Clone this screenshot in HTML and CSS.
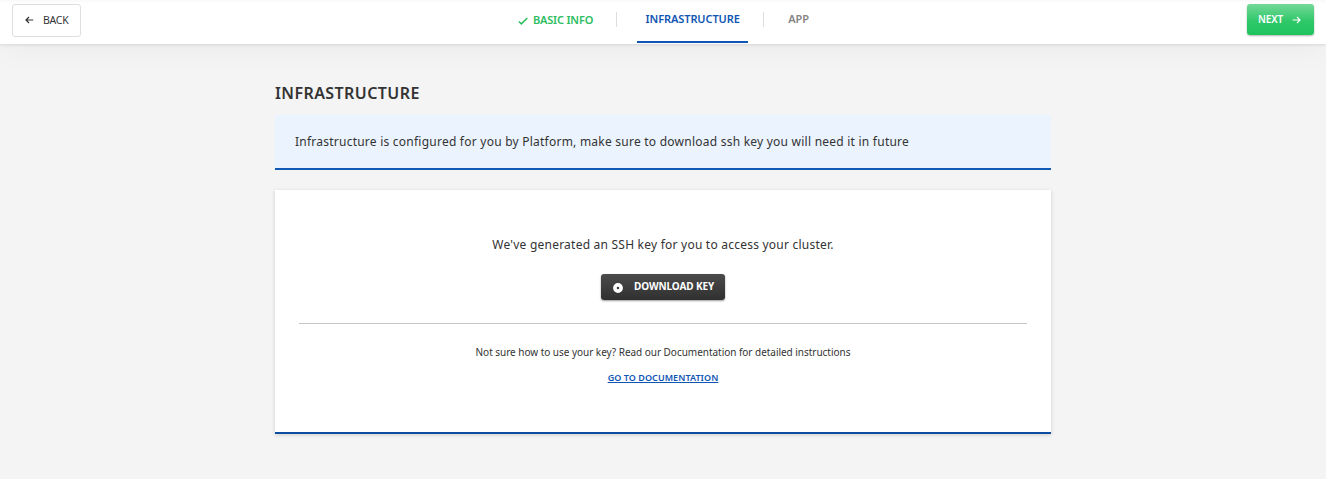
FILE: index.html
```html
<!DOCTYPE html>
<html lang="en">
<head>
<meta charset="utf-8">
<title>Infrastructure</title>
<link rel="stylesheet" href="styles.css">
</head>
<body>
<header class="topbar">
  <button class="btn btn-back">
    <svg class="icon-arrow" viewBox="0 0 9 8" width="9" height="8"><path d="M8.2 4H1M4 1L1 4l3 3"/></svg>
    <span class="t-back">BACK</span>
  </button>
  <nav class="steps">
    <a class="step step-done"><svg class="icon-check" viewBox="0 0 10 8" width="10" height="8"><path d="M.8 4.5l2.6 2.4L9.3 1"/></svg><span class="t-basic">BASIC INFO</span></a>
    <i class="divider"></i>
    <a class="step step-active"><span class="t-infra">INFRASTRUCTURE</span></a>
    <i class="divider"></i>
    <a class="step step-next"><span class="t-app">APP</span></a>
  </nav>
  <button class="btn btn-next">
    <span class="t-next">NEXT</span>
    <svg class="icon-arrow" viewBox="0 0 9 8" width="9" height="8"><path d="M.6 4H8M5 1l3 3-3 3"/></svg>
  </button>
</header>
<main class="content">
  <h1 class="title"><span>INFRASTRUCTURE</span></h1>
  <div class="notice"><span>Infrastructure is configured for you by Platform, make sure to download ssh key you will need it in future</span></div>
  <section class="card">
    <p class="lead"><span>We've generated an SSH key for you to access your cluster.</span></p>
    <button class="btn btn-download">
      <svg class="icon-disc" viewBox="0 0 10 10" width="10" height="10"><circle cx="5" cy="5" r="3.1"/></svg>
      <span class="t-download">DOWNLOAD KEY</span>
    </button>
    <hr class="rule">
    <p class="hint"><span>Not sure how to use your key? Read our Documentation for detailed instructions</span></p>
    <a class="doc-link">GO TO DOCUMENTATION</a>
  </section>
</main>
</body>
</html>
```
FILE: styles.css
```css
* { box-sizing: border-box; }
body {
  margin: 0;
  min-height: 479px;
  background: #f4f4f4;
  color: #333;
  font-family: "Noto Sans", sans-serif;
}
svg { display: block; fill: none; stroke: currentColor; flex: none; }
span { white-space: nowrap; }
.topbar {
  display: grid;
  grid-template-columns: 1fr auto 1fr;
  align-items: start;
  height: 44px;
  padding: 4px 12px 0;
  background: linear-gradient(#f8f8f8, #fff 3px);
  box-shadow: 0 1px 3px rgba(0,0,0,.1), 0 2px 32px rgba(0,0,0,.05);
}
.btn {
  display: flex;
  align-items: center;
  font: 500 10px/14px "Noto Sans", sans-serif;
  border: 0;
  border-radius: 3px;
}
.icon-arrow { stroke-width: 1.2; }
.btn-back {
  width: 69px;
  height: 33px;
  padding: 0 0 1px 12px;
  gap: 9px;
  border: 1px solid #dedede;
  background: #fff;
  color: #333;
  font-size: 10.5px;
  font-weight: 400;
  letter-spacing: -.25px;
}
.btn-next {
  justify-self: end;
  width: 67px;
  height: 31px;
  padding: 0 0 0 11px;
  gap: 9px;
  color: #fff;
  background: linear-gradient(#75d898, #2fc86a 55%, #1fc35e);
  box-shadow: 0 1px 2px rgba(0,0,0,.3);
  font-weight: 600;
  letter-spacing: -.1px;
}
.t-next { margin-top: -1px; }
.steps { display: flex; align-items: flex-start; padding-left: 1px; }
.step { display: flex; font-size: 11px; line-height: 15px; font-weight: 600; }
.step-done { color: #2cbd60; padding: 8px 23px 0 0; gap: 5px; letter-spacing: -.18px; }
.icon-check { stroke-width: 1.5; margin-top: 5px; }
.step-active {
  width: 111px;
  height: 39px;
  padding-top: 7px;
  justify-content: center;
  margin: 0 15px 0 20px;
  color: #0f55b3;
  letter-spacing: -.1px;
  border-bottom: 2px solid #0f55b3;
}
.step-next { color: #858585; padding: 7px 0 0 24px; }
.divider { width: 1px; height: 15px; margin-top: 8px; background: #ddd; }
.content { width: 776px; margin: 0 auto; padding-top: 37px; }
.title { margin: 0; font-size: 16px; line-height: 24px; font-weight: 600; letter-spacing: .42px; }
.notice {
  height: 55px;
  margin-top: 10px;
  padding: 18px 20px 0;
  background: #ebf3ff;
  border-bottom: 2px solid #0f5ab5;
  font-size: 12px;
  line-height: 18px;
  letter-spacing: .236px;
}
.card {
  display: flex;
  flex-direction: column;
  align-items: center;
  height: 244px;
  margin-top: 20px;
  padding: 46px 24px 0;
  background: #fff;
  border-bottom: 2px solid #0c4da2;
  box-shadow: 0 1px 4px rgba(0,0,0,.16);
}
.lead { margin: 0; font-size: 12px; line-height: 18px; letter-spacing: .225px; }
.btn-download {
  width: 124px;
  height: 26px;
  margin-top: 20px;
  padding: 0 0 1px 12px;
  gap: 11px;
  color: #fff;
  background: linear-gradient(#4b4b4b, #303030);
  box-shadow: 0 1px 2px rgba(0,0,0,.4);
  font-weight: 700;
  letter-spacing: -.1px;
}
.t-download { margin-top: -1px; }
.icon-disc { stroke-width: 3.6; margin-top: 3px; }
.rule { width: 100%; height: 1px; margin: 23px 0 0; border: 0; background: #c6c6c6; }
.hint { margin: 21px 0 0; font-size: 10px; line-height: 14px; letter-spacing: -.03px; }
.doc-link {
  margin-top: 12px;
  font-size: 9px;
  line-height: 13px;
  font-weight: 600;
  letter-spacing: .06px;
  color: #0f55b3;
  text-decoration: underline;
}
```
